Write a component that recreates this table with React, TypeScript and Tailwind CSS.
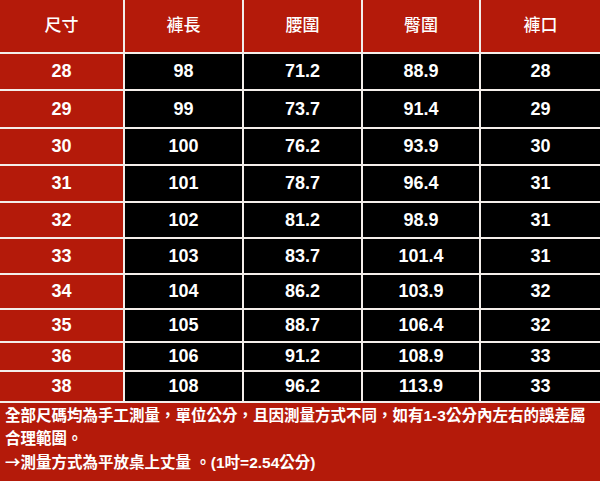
const headers = ['尺寸', '褲長', '腰圍', '臀圍', '褲口']

const rows = [
  { h: 'h-[35px]', cells: ['28', '98', '71.2', '88.9', '28'] },
  { h: 'h-[36px]', cells: ['29', '99', '73.7', '91.4', '29'] },
  { h: 'h-[35px]', cells: ['30', '100', '76.2', '93.9', '30'] },
  { h: 'h-[35px]', cells: ['31', '101', '78.7', '96.4', '31'] },
  { h: 'h-[34px]', cells: ['32', '102', '81.2', '98.9', '31'] },
  { h: 'h-[34px]', cells: ['33', '103', '83.7', '101.4', '31'] },
  { h: 'h-[33px]', cells: ['34', '104', '86.2', '103.9', '32'] },
  { h: 'h-[31px]', cells: ['35', '105', '88.7', '106.4', '32'] },
  { h: 'h-[27px]', cells: ['36', '106', '91.2', '108.9', '33'] },
  { h: 'h-[29px]', cells: ['38', '108', '96.2', '113.9', '33'] },
]

const cjk = 'font-["Liberation_Sans","Noto_Sans_CJK_TC",sans-serif]'

export default function App() {
  return (
    <div className={`w-[600px] h-[481px] bg-[#b41a0a] text-white overflow-hidden ${cjk}`}>
      {/* table */}
      <div className="grid grid-cols-[123px_117px_117px_116px_1fr] gap-[2px] bg-[#f4eeea] pb-[2px]">
        {headers.map((t) => (
          <div key={t} className="h-[52px] bg-[#b41a0a] flex items-center justify-center text-[17px] font-medium">
            {t}
          </div>
        ))}
        {rows.map((r) =>
          r.cells.map((c, i) => (
            <div
              key={r.cells[0] + '-' + i}
              className={`${r.h} flex items-center justify-center text-[18px] font-bold ${
                i === 0 ? 'bg-[#b41a0a]' : 'bg-black'
              }`}
            >
              {c}
            </div>
          ))
        )}
      </div>

      {/* note */}
      <div className="px-[5px] pt-[2px] text-[15.5px] font-bold leading-[22.5px] whitespace-nowrap">
        <div>全部尺碼均為手工測量，單位公分，且因測量方式不同，如有1-3公分內左右的誤差屬</div>
        <div>合理範圍。</div>
        <div>
          <span className='font-["Noto_Sans_CJK_TC",sans-serif]'>→</span>測量方式為平放桌上丈量 。(1吋=2.54公分)
        </div>
      </div>
    </div>
  )
}
